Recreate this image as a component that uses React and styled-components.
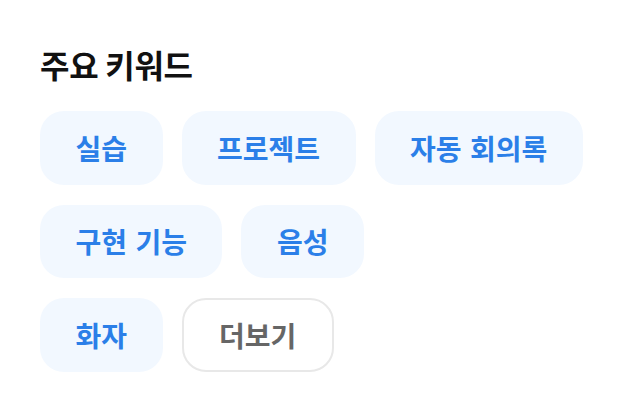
import React from "react";
import styled, { createGlobalStyle } from "styled-components";

const Global = createGlobalStyle`
  html, body { margin: 0; padding: 0; background: #ffffff; }
  body { font-family: "Noto Sans CJK KR", "Noto Sans", sans-serif; }
`;

const Section = styled.section`
  padding: 41px 40px 0 40px;
  width: 626px;
  box-sizing: border-box;
`;

const Title = styled.h2`
  margin: 0 0 24px 0;
  font-size: 32px;
  line-height: 46px;
  font-weight: 700;
  color: #111111;
  letter-spacing: -0.3px;
`;

const ChipList = styled.div`
  display: flex;
  flex-direction: column;
  align-items: flex-start;
  gap: 20px;
`;

const ChipRow = styled.div`
  display: flex;
  gap: 19px;
`;

const Chip = styled.button`
  height: 73.5px;
  padding: 0 35.5px;
  border-radius: 24px;
  font-family: inherit;
  font-size: 28px;
  font-weight: 700;
  letter-spacing: 0;
  word-spacing: 2px;
  cursor: pointer;
  display: inline-flex;
  align-items: center;
  justify-content: center;
  box-sizing: border-box;
  white-space: nowrap;
  background: ${(p) => (p.$more ? "#ffffff" : "#F2F8FF")};
  color: ${(p) => (p.$more ? "#666666" : "#2B7FE8")};
  border: ${(p) => (p.$more ? "2px solid #E8E8E8" : "none")};
`;

const rows = [
  ["실습", "프로젝트", "자동 회의록"],
  ["구현 기능", "음성"],
  ["화자"],
];

export default function App() {
  return (
    <>
      <Global />
      <Section>
        <Title>주요 키워드</Title>
        <ChipList>
          {rows.map((row, i) => (
            <ChipRow key={i}>
              {row.map((k) => (
                <Chip key={k}>{k}</Chip>
              ))}
              {i === rows.length - 1 && <Chip $more>더보기</Chip>}
            </ChipRow>
          ))}
        </ChipList>
      </Section>
    </>
  );
}
